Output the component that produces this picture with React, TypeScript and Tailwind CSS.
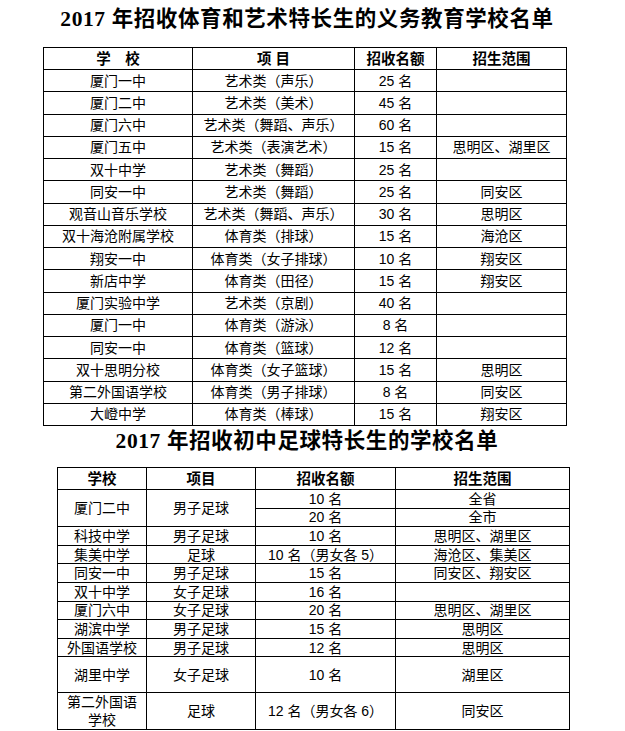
import React from "react";

const top: [string, string, string, string][] = [
  ["厦门一中", "艺术类（声乐）", "25 名", ""],
  ["厦门二中", "艺术类（美术）", "45 名", ""],
  ["厦门六中", "艺术类（舞蹈、声乐）", "60 名", ""],
  ["厦门五中", "艺术类（表演艺术）", "15 名", "思明区、湖里区"],
  ["双十中学", "艺术类（舞蹈）", "25 名", ""],
  ["同安一中", "艺术类（舞蹈）", "25 名", "同安区"],
  ["观音山音乐学校", "艺术类（舞蹈、声乐）", "30 名", "思明区"],
  ["双十海沧附属学校", "体育类（排球）", "15 名", "海沧区"],
  ["翔安一中", "体育类（女子排球）", "10 名", "翔安区"],
  ["新店中学", "体育类（田径）", "15 名", "翔安区"],
  ["厦门实验中学", "艺术类（京剧）", "40 名", ""],
  ["厦门一中", "体育类（游泳）", "8 名", ""],
  ["同安一中", "体育类（篮球）", "12 名", ""],
  ["双十思明分校", "体育类（女子篮球）", "15 名", "思明区"],
  ["第二外国语学校", "体育类（男子排球）", "8 名", "同安区"],
  ["大嶝中学", "体育类（棒球）", "15 名", "翔安区"],
];

const bottom: [string, string, string, string][] = [
  ["科技中学", "男子足球", "10 名", "思明区、湖里区"],
  ["集美中学", "足球", "10 名（男女各 5）", "海沧区、集美区"],
  ["同安一中", "男子足球", "15 名", "同安区、翔安区"],
  ["双十中学", "女子足球", "16 名", ""],
  ["厦门六中", "女子足球", "20 名", "思明区、湖里区"],
  ["湖滨中学", "男子足球", "15 名", "思明区"],
  ["外国语学校", "男子足球", "12 名", "思明区"],
];

const td = "border border-black text-center align-middle px-1 p-0 font-normal";
const th = "border border-black text-center align-middle p-0 font-bold text-[14.5px]";

export default function App() {
  return (
    <div
      className="w-[625px] h-[731px] bg-white text-black overflow-hidden text-[14px] leading-[18px]"
      style={{ fontFamily: '"Liberation Sans", "Noto Sans CJK SC", sans-serif' }}
    >
      <div className="ml-[43px] w-[523px]">
        <div
          className="h-[47px] pb-[9px] pl-[5px] flex items-center justify-center text-[21.5px] font-bold leading-[26px] tracking-[0.6px] whitespace-nowrap"
          style={{ fontFamily: '"Liberation Serif", "Noto Sans CJK SC", serif' }}
        >
          2017 年招收体育和艺术特长生的义务教育学校名单
        </div>
        <table className="w-[523px] table-fixed border-collapse">
          <colgroup>
            <col className="w-[149px]" />
            <col className="w-[162px]" />
            <col className="w-[82px]" />
            <col className="w-[130px]" />
          </colgroup>
          <thead>
            <tr className="h-[22px]">
              <th className={th}>学　校</th>
              <th className={th}>项 目</th>
              <th className={th}>招收名额</th>
              <th className={th}>招生范围</th>
            </tr>
          </thead>
          <tbody>
            {top.map((r, i) => (
              <tr key={i} className="h-[22.25px]">
                {r.map((c, j) => (
                  <td key={j} className={td + " whitespace-nowrap"}>
                    {c}
                  </td>
                ))}
              </tr>
            ))}
          </tbody>
        </table>
        <div
          className="h-[41px] pb-[11px] pl-[5px] flex items-center justify-center text-[21.5px] font-bold leading-[26px] tracking-[0.6px] whitespace-nowrap"
          style={{ fontFamily: '"Liberation Serif", "Noto Sans CJK SC", serif' }}
        >
          2017 年招收初中足球特长生的学校名单
        </div>
      </div>
      <div className="ml-[57px] w-[512px]">
        <table className="w-[512px] table-fixed border-collapse leading-[16px]">
          <colgroup>
            <col className="w-[89px]" />
            <col className="w-[109px]" />
            <col className="w-[140px]" />
            <col className="w-[174px]" />
          </colgroup>
          <thead>
            <tr className="h-[22px]">
              <th className={th}>学校</th>
              <th className={th}>项目</th>
              <th className={th}>招收名额</th>
              <th className={th}>招生范围</th>
            </tr>
          </thead>
          <tbody>
            <tr className="h-[18.6px]">
              <td rowSpan={2} className={td}>厦门二中</td>
              <td rowSpan={2} className={td}>男子足球</td>
              <td className={td}>10 名</td>
              <td className={td}>全省</td>
            </tr>
            <tr className="h-[18.6px]">
              <td className={td}>20 名</td>
              <td className={td}>全市</td>
            </tr>
            {bottom.map((r, i) => (
              <tr key={i} className="h-[18.6px]">
                {r.map((c, j) => (
                  <td key={j} className={td + " whitespace-nowrap"}>
                    {c}
                  </td>
                ))}
              </tr>
            ))}
            <tr className="h-[36px]">
              <td className={td}>湖里中学</td>
              <td className={td}>女子足球</td>
              <td className={td}>10 名</td>
              <td className={td}>湖里区</td>
            </tr>
            <tr className="h-[36px]">
              <td className={td + " leading-[18px]"}>第二外国语学校</td>
              <td className={td}>足球</td>
              <td className={td}>12 名（男女各 6）</td>
              <td className={td}>同安区</td>
            </tr>
          </tbody>
        </table>
      </div>
    </div>
  );
}
